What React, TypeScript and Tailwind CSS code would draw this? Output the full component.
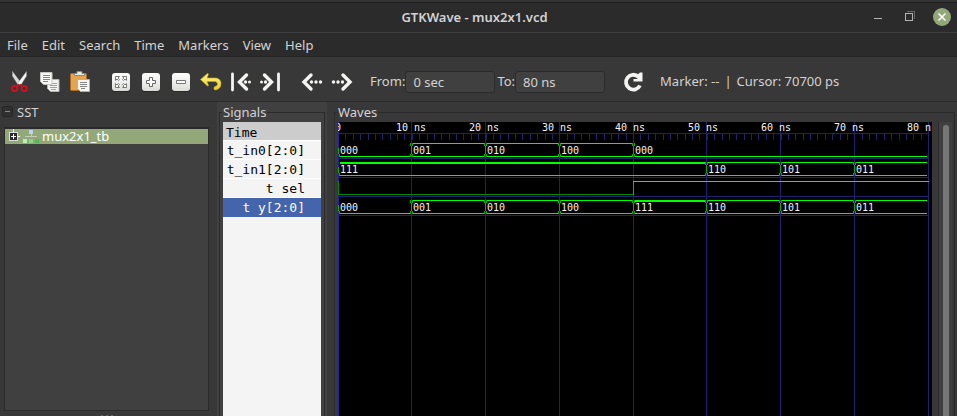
import type { ReactNode } from 'react';

const MENU = ['File', 'Edit', 'Search', 'Time', 'Markers', 'View', 'Help'];
const GREEN = '#00ff00';
const BLUE = '#202070';
const EDGES = [0, 73, 147, 221, 295, 368, 442, 516, 590];

function Svg({ children }: { children: ReactNode }) {
  return (
    <svg width="24" height="24" viewBox="0 0 24 24" fill="none" aria-hidden="true">
      {children}
    </svg>
  );
}

function Defs() {
  return (
    <svg width="0" height="0" className="absolute" aria-hidden="true">
      <defs>
        <linearGradient id="key" x1="0" y1="0" x2="0" y2="1">
          <stop offset="0" stopColor="#ffffff" />
          <stop offset="1" stopColor="#dcdcd8" />
        </linearGradient>
        <linearGradient id="gold" x1="0" y1="0" x2="0" y2="1">
          <stop offset="0" stopColor="#fff48a" />
          <stop offset="1" stopColor="#ecd024" />
        </linearGradient>
      </defs>
    </svg>
  );
}

const CutIcon = () => (
  <Svg>
    <path d="M4.500 1.500 4.500 6l6 9.500 3-2z" fill="#dededc" stroke="#aaa" strokeWidth=".5" />
    <path d="M18.500 1.500 18.500 6l-6 9.500-3-2z" fill="#f8f8f6" stroke="#999" strokeWidth=".5" />
    <path d="m11.500 14.500-2.500 2m3-2 2.500 2" stroke="#c80f1d" strokeWidth="2" />
    <ellipse cx="6.800" cy="18.500" rx="2.600" ry="2.600" stroke="#d5101f" strokeWidth="1.900" />
    <ellipse cx="16.200" cy="18.500" rx="2.600" ry="2.600" stroke="#d5101f" strokeWidth="1.900" />
  </Svg>
);

const CopyIcon = () => (
  <Svg>
    <path d="M9.500 9.500h11.500v12H12.500l-3-3z" fill="#f3f3f1" stroke="#b4b4b2" />
    <path d="M12 13.500h7M12 15.500h7M12 17.500h7M13 19.500h5" stroke="#a0a09e" />
    <path d="M2.500 2.500h11.500v12H5.500l-3-3z" fill="#f8f8f6" stroke="#c4c4c2" />
    <path d="M5 5.500h7M5 7.500h7M5 9.500h7M5 11.500h5" stroke="#858583" />
  </Svg>
);

const PasteIcon = () => (
  <Svg>
    <rect x="2.500" y="3.500" width="16" height="17" rx="1" fill="#e2a653" stroke="#a96b1d" />
    <path d="M6.500 5.500V3.500h2.500v-2h5v2h2.500v2z" fill="#e8e8e5" stroke="#888886" />
    <path d="M9.500 9.500h12v12h-9l-3-3z" fill="#f6f6f4" stroke="#b0b0ae" />
    <path d="M12 12.500h7M12 14.500h7M12 16.500h7M13 18.500h4" stroke="#858583" />
  </Svg>
);

function KeyIcon({ children }: { children: ReactNode }) {
  return (
    <Svg>
      <rect x="3" y="4" width="18" height="18" rx="3" fill="#000" opacity=".3" />
      <rect x="3" y="3" width="18" height="18" rx="3" fill="url(#key)" />
      {children}
    </Svg>
  );
}

const FitIcon = () => (
  <KeyIcon>
    <g stroke="#777775" fill="#fff">
      <path d="M6.500 6.500h4l-1.500 1.500 1.500 1.500-1 1-1.500-1.500-1.500 1.500z" />
      <path d="M17.500 6.500v4L16 9l-1.500 1.500-1-1L15 8l-1.500-1.500z" />
      <path d="M6.500 17.500v-4L8 15l1.500-1.500 1 1L9 16l1.500 1.500z" />
      <path d="M17.500 17.500h-4L15 16l-1.500-1.500 1-1L16 15l1.500-1.500z" />
    </g>
  </KeyIcon>
);

const PlusIcon = () => (
  <KeyIcon>
    <path d="M10.500 7.500h3v3h3v3h-3v3h-3v-3h-3v-3h3z" fill="#fff" stroke="#666664" />
  </KeyIcon>
);

const MinusIcon = () => (
  <KeyIcon>
    <path d="M7.500 10.500h9v3h-9z" fill="#fff" stroke="#777775" />
  </KeyIcon>
);

const UndoIcon = () => (
  <Svg>
    <path
      d="M1.500 9.500 8.500 3.500l1 .5-1.500 4h8c4 0 6 2.500 6 5.500 0 4-2.500 6-5.500 6.500-2 0-2-3-.500-3.500 2-.500 2.500-1.500 2.500-2.500s-1-2.500-2.500-2.500H8l1.500 4-1 .5z"
      fill="url(#gold)"
      stroke="#c9a916"
      strokeWidth=".6"
    />
  </Svg>
);

const chevron = { stroke: '#f4f4f2', strokeWidth: 3.4, strokeLinejoin: 'miter', strokeLinecap: 'round' } as const;

const FirstIcon = () => (
  <Svg>
    <path d="M3.500 4v16" stroke="#f4f4f2" strokeWidth="2.800" strokeLinecap="round" />
    <path d="m17.500 5-7 7 7 7" {...chevron} />
    <circle cx="16.500" cy="12" r="1.700" fill="#f4f4f2" />
    <circle cx="20.500" cy="12" r="1.500" fill="#f4f4f2" />
  </Svg>
);

const LastIcon = () => (
  <Svg>
    <path d="M19.500 4v16" stroke="#f4f4f2" strokeWidth="2.800" strokeLinecap="round" />
    <path d="m5.500 5 7 7-7 7" {...chevron} />
    <circle cx="6.500" cy="12" r="1.700" fill="#f4f4f2" />
    <circle cx="2.500" cy="12" r="1.500" fill="#f4f4f2" />
  </Svg>
);

const PrevIcon = () => (
  <Svg>
    <path d="m11 5-7 7 7 7" {...chevron} />
    <circle cx="11.500" cy="12" r="1.700" fill="#f4f4f2" />
    <circle cx="16" cy="12" r="1.700" fill="#f4f4f2" />
    <circle cx="20.500" cy="12" r="1.700" fill="#f4f4f2" />
  </Svg>
);

const NextIcon = () => (
  <Svg>
    <path d="m13 5 7 7-7 7" {...chevron} />
    <circle cx="12.500" cy="12" r="1.700" fill="#f4f4f2" />
    <circle cx="8" cy="12" r="1.700" fill="#f4f4f2" />
    <circle cx="3.500" cy="12" r="1.700" fill="#f4f4f2" />
  </Svg>
);

const ReloadIcon = () => (
  <Svg>
    <path d="M17.500 6.800A7.400 7.400 0 1 0 19 15.500" stroke="#f4f4f2" strokeWidth="3.800" />
    <path d="M21.500 2.500v9H12.500V9h4l-1-3.500 3.500-3z" fill="#f4f4f2" />
  </Svg>
);

const TOOL_GROUPS = [
  [
    { label: 'Cut', icon: <CutIcon /> },
    { label: 'Copy', icon: <CopyIcon /> },
    { label: 'Paste', icon: <PasteIcon /> },
  ],
  [
    { label: 'Zoom fit', icon: <FitIcon /> },
    { label: 'Zoom in', icon: <PlusIcon /> },
    { label: 'Zoom out', icon: <MinusIcon /> },
    { label: 'Undo zoom', icon: <UndoIcon /> },
    { label: 'Go to start', icon: <FirstIcon /> },
    { label: 'Go to end', icon: <LastIcon /> },
  ],
  [
    { label: 'Previous edge', icon: <PrevIcon /> },
    { label: 'Next edge', icon: <NextIcon /> },
  ],
];

function ToolButton({ label, icon }: { label: string; icon: ReactNode }) {
  return (
    <button type="button" aria-label={label} className="flex h-8 w-[30px] shrink-0 items-center justify-center">
      {icon}
    </button>
  );
}

function TimeField({ id, label, value }: { id: string; label: string; value: string }) {
  return (
    <div className="flex shrink-0 items-center">
      <label htmlFor={id}>{label}</label>
      <input
        id={id}
        defaultValue={value}
        className="h-[22px] w-[90px] rounded-[3px] border border-[#2b2b2b] bg-[#404040] px-[7px] text-[#d3d3d3] outline-none"
      />
    </div>
  );
}

const BUS_ROWS = [
  { y: 21, values: ['000', '001', '010', '100', '000'], spans: [0, 1, 2, 3, 4, 8] },
  { y: 40, values: ['111', '110', '101', '011'], spans: [0, 5, 6, 7, 8] },
  { y: 78, values: ['000', '001', '010', '100', '111', '110', '101', '011'], spans: [0, 1, 2, 3, 4, 5, 6, 7, 8] },
];

function Waveform() {
  const ticks = Array.from({ length: 80 }, (_, i) => Math.round(i * 7.375));
  return (
    <svg className="block h-full w-full" shapeRendering="crispEdges" role="img" aria-label="Waveforms">
      <path d="M0 11.500H590" stroke={BLUE} />
      {ticks.map((x) => (
        <path key={x} d={`M${x + 0.5} 12v6`} stroke={BLUE} />
      ))}
      {[36.5, 55.5, 74.5, 93.5].map((y) => (
        <path key={y} d={`M0 ${y}H590`} stroke={BLUE} />
      ))}
      {EDGES.map((x, i) => (
        <line key={x} x1={x + 0.5} x2={x + 0.5} y1="0" y2="100%" stroke={i === 0 ? '#2020a0' : BLUE} />
      ))}
      {BUS_ROWS.map((row) =>
        row.values.map((value, i) => {
          const start = EDGES[row.spans[i]];
          const end = EDGES[row.spans[i + 1]];
          const left = start + 2;
          const right = end - 1;
          const top = row.y + 0.5;
          const bottom = row.y + 13.5;
          const zero = value === '000';
          const ones = value === '111';
          return (
            <g key={`${row.y}-${i}`} stroke={GREEN} fill="none">
              {!zero && (
                <path d={`M${left} ${ones ? row.y + 1 : top}H${right}`} strokeWidth={ones ? 2 : 1} />
              )}
              <path d={`M${left} ${bottom}H${right}`} />
              {i > 0 && (
                <path
                  d={`M${start - 0.5} ${row.y}v3m1 0v2m0 4v2m-1 0v3M${start + 1.5} ${row.y}v3m0 8v3M${start + 0.5} ${row.y + 4}v6`}
                  stroke="#00b400"
                />
              )}
              {i === 0 && <path d={`M.5 ${row.y + 5}v6M1.500 ${row.y + 11}v3`} stroke="#00b400" />}
            </g>
          );
        }),
      )}
      <path d="M.5 59v14M0 72.500H295" stroke="#008a00" fill="none" />
      <path d="M295.500 73V59" stroke="#00c800" />
      <path d="M295 59.500H591" stroke={GREEN} />
      <g fill="#f5f5f5" fontFamily="'DejaVu Sans Mono', monospace" fontSize="10">
        <text x="-3" y="9">0</text>
        {[10, 20, 30, 40, 50, 60, 70, 80].map((t, i) => (
          <text key={t} x={58 + i * 73} y="9">{`${t} ns`}</text>
        ))}
        {BUS_ROWS.map((row) =>
          row.values.map((value, i) => (
            <text key={`${row.y}-${i}`} x={EDGES[row.spans[i]] + 2} y={row.y + 11}>
              {value}
            </text>
          )),
        )}
      </g>
    </svg>
  );
}

function Frame({ title, className, titleClass, children }: { title: string; className: string; titleClass: string; children: ReactNode }) {
  return (
    <section className={`relative flex flex-col pt-2.5 ${className}`}>
      <h2 className={`absolute top-px z-10 bg-inherit px-px leading-[18px] font-normal ${titleClass}`}>{title}</h2>
      <div className="flex min-h-0 flex-1 border-x border-t border-[#2b2b2b] pt-[9px]">{children}</div>
    </section>
  );
}

const SIGNALS = [
  { name: 't_in0[2:0]', style: 'border-b border-white' },
  { name: 't_in1[2:0]', style: 'border-b border-white' },
  { name: 't sel', style: 'border-b border-white' },
  { name: 't y[2:0]', style: 'bg-[#4464ac] text-white' },
];

export default function App() {
  return (
    <div className="flex h-screen flex-col overflow-hidden bg-[#383838] font-['Noto_Sans','Open_Sans',sans-serif] text-[13px] text-[#d3d3d3]">
      <Defs />
      <header className="grid h-[33px] shrink-0 grid-cols-[1fr_auto_1fr] items-center border-b border-[#3d3d3d] bg-[#2b2b2b] shadow-[inset_0_2px_0_#333,inset_0_3px_0_#1e1e1e]">
        <span />
        <h1 className="pt-px pr-2 leading-5 font-semibold">GTKWave - mux2x1.vcd</h1>
        <div className="flex items-center justify-end gap-3 pr-[5px]">
          <button type="button" aria-label="Minimize" className="flex size-5 items-center justify-center">
            <svg width="20" height="20" shapeRendering="crispEdges"><path d="M6 12.500h8" stroke="#b4b4b4" /></svg>
          </button>
          <button type="button" aria-label="Restore" className="flex size-5 items-center justify-center">
            <svg width="20" height="20" fill="none" shapeRendering="crispEdges">
              <path d="M7 5.500h7.500V13" stroke="#666" />
              <rect x="5.500" y="7.500" width="7" height="7" stroke="#b4b4b4" />
            </svg>
          </button>
          <button type="button" aria-label="Close" className="flex size-5 items-center justify-center">
            <svg width="20" height="20">
              <circle cx="10" cy="11" r="9" fill="#92a878" />
              <path d="m6.500 7.500 7 7m0-7-7 7" stroke="#fff" strokeWidth="1.600" />
            </svg>
          </button>
        </div>
      </header>

      <nav className="flex h-6 shrink-0 items-center gap-[14px] border-b border-[#242424] bg-[#2b2b2b] px-[7px]">
        {MENU.map((item) => (
          <button key={item} type="button" className="leading-5">
            {item}
          </button>
        ))}
      </nav>

      <div className="flex h-[45px] shrink-0 items-center border-b border-[#2b2b2b] pt-[6px] pl-[5px]">
        <div className="flex gap-[11px]">
          {TOOL_GROUPS.map((group, i) => (
            <div key={i} className="flex">
              {group.map((tool) => (
                <ToolButton key={tool.label} {...tool} />
              ))}
            </div>
          ))}
        </div>
        <div className="ml-[13px] flex items-center gap-[2px]">
          <TimeField id="from" label="From:" value="0 sec" />
          <TimeField id="to" label="To:" value="80 ns" />
        </div>
        <div className="ml-[13px] flex items-center gap-3">
          <ToolButton label="Reload" icon={<ReloadIcon />} />
          <div className="flex gap-[5px]">
            <span>Marker: --</span>
            <span>|</span>
            <span>Cursor: 70700 ps</span>
          </div>
        </div>
      </div>

      <main className="flex min-h-0 flex-1">
        <aside className="flex w-[217px] shrink-0 flex-col pr-2 pl-1">
          <div className="flex h-[25px] items-start gap-1 pt-px">
            <button type="button" aria-label="Collapse SST" className="-ml-[2px] mt-[3px] flex size-[11px] items-center justify-center rounded-xs border border-[#262626] bg-[#303030]">
              <span className="h-px w-[5px] bg-[#888]" />
            </button>
            <h2 className="leading-[18px] font-normal">SST</h2>
          </div>
          <div className="min-h-0 flex-1 border border-t-2 border-[#2a2a2a] bg-[#404040]">
            <button type="button" className="flex h-[15px] w-full items-center bg-[#92a878] text-white">
              <svg width="36" height="15" shapeRendering="crispEdges" aria-hidden="true">
                <path d="M8.500 0v4M13 7.500h2" stroke="#fff" />
                <rect x="4.500" y="3.500" width="8" height="8" fill="#2a2a35" stroke="#ddd" />
                <path d="M6 7.500h5M8.500 5v5" stroke="#fff" />
                <path d="M26.500 5v3M20 7.500h12" stroke="#c4d0b8" />
                <rect x="24" y="1" width="4" height="4" fill="#b8d4f4" />
                <rect x="18" y="10" width="4" height="4" fill="#b7efb2" />
                <rect x="24" y="10" width="4" height="4" fill="#8ad486" />
                <rect x="30" y="10" width="4" height="4" fill="#57b953" />
              </svg>
              <span className="pl-px leading-[17px]">mux2x1_tb</span>
            </button>
          </div>
          <div className="flex h-[5px] shrink-0 items-end justify-center gap-[3px]">
            <span className="h-px w-[2px] bg-[#666]" />
            <span className="h-px w-[2px] bg-[#666]" />
            <span className="h-px w-[2px] bg-[#666]" />
          </div>
        </aside>

        <Frame title="Signals" titleClass="left-[5px]" className="w-[110px] shrink-0 bg-[#404040] px-[2px]">
          <div className="mx-[3px] flex-1 bg-[#f4f4f4] font-['DejaVu_Sans_Mono',monospace] text-black">
            <div className="h-[19px] border-b border-white bg-[#ccc] pl-[3px] leading-[22px]">Time</div>
            {SIGNALS.map((s) => (
              <div key={s.name} className={`h-[19px] pr-4 text-right leading-[20px] ${s.style}`}>
                {s.name}
              </div>
            ))}
          </div>
        </Frame>

        <Frame title="Waves" titleClass="left-[10px]" className="min-w-0 flex-1 bg-[#383838] pr-[2px] pl-[7px]">
          <div className="ml-[3px] min-w-0 flex-1 bg-black">
            <Waveform />
          </div>
          <div className="mr-[2px] ml-[6px] flex w-[14px] shrink-0 justify-center border-l border-[#2b2b2b] bg-[#404040] pt-[3px]">
            <div className="w-[6px] rounded-t-full bg-[#777]" />
          </div>
        </Frame>
      </main>
    </div>
  );
}
